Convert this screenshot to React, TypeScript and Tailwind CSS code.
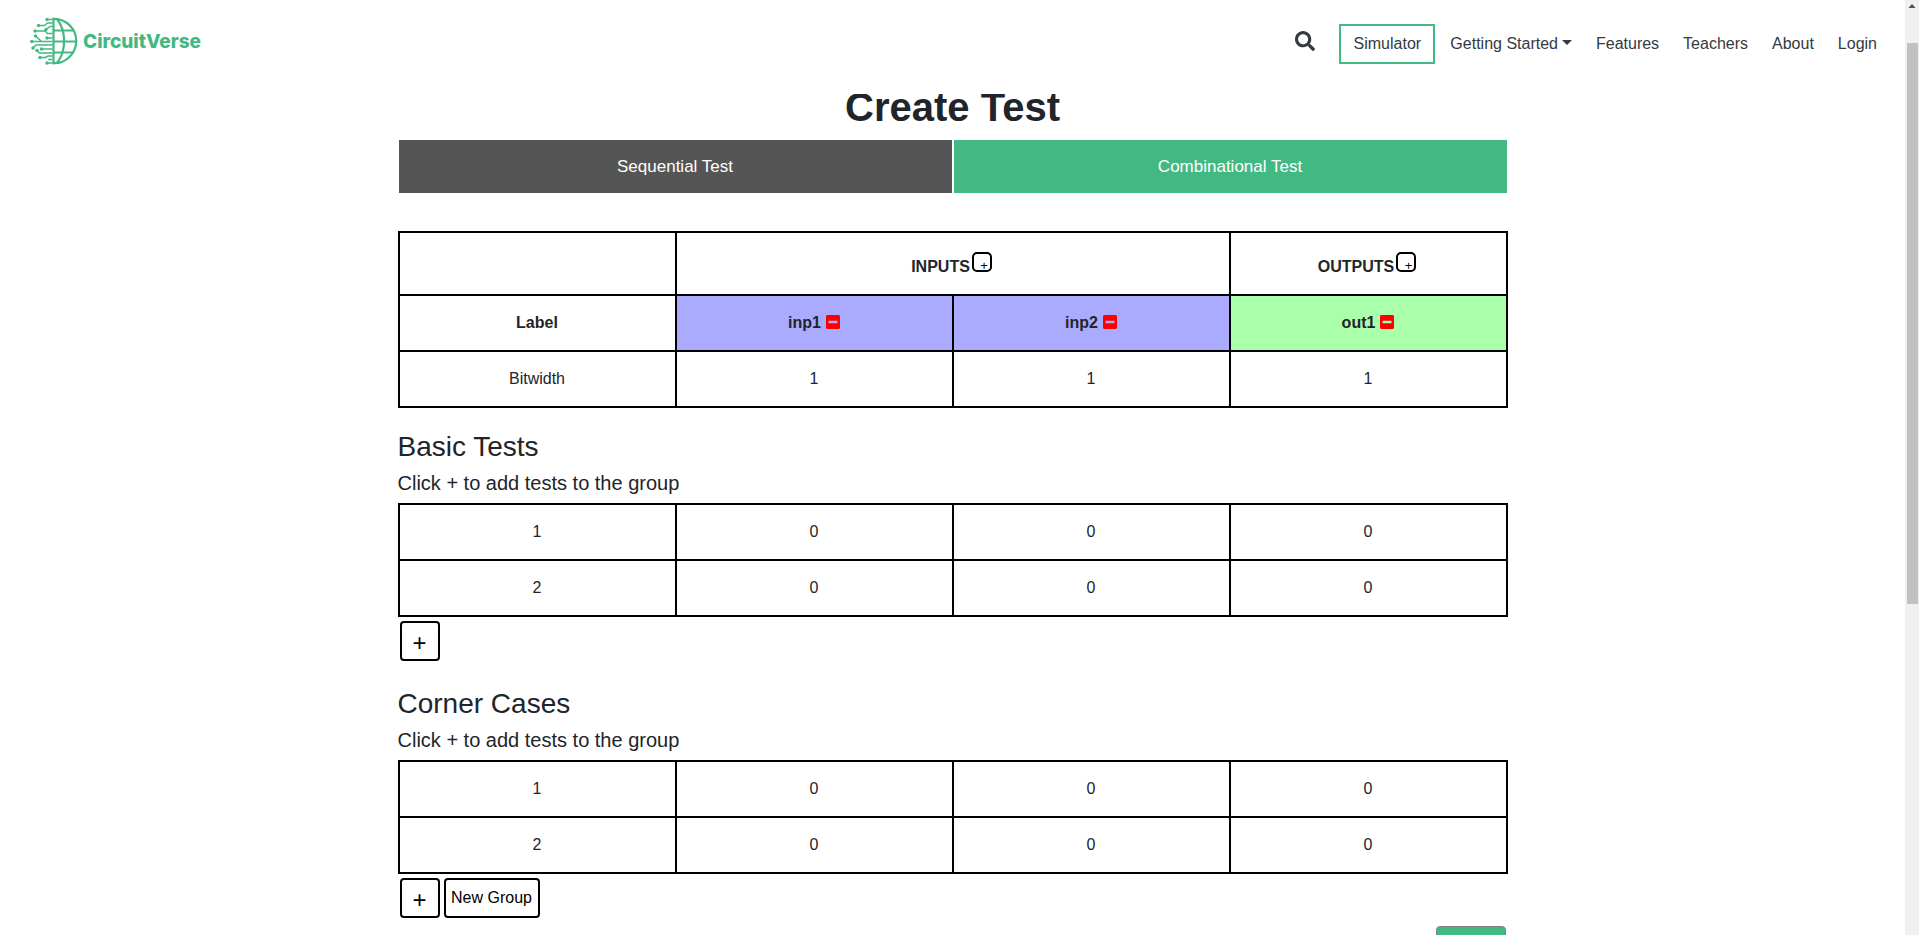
import React from "react";
import { FaSearch, FaMinusSquare } from "react-icons/fa";

const cell = "border-2 border-black p-0 text-center";

const logoNodes = [
  [17, 2.5],
  [8.5, 8.5],
  [16, 12.5],
  [5, 14],
  [5.5, 19],
  [17, 21],
  [1.8, 24.5],
  [3, 31],
  [7, 33.5],
  [11.5, 32],
  [10, 40.5],
  [17, 46],
];

function Logo() {
  return (
    <svg width="48" height="48" viewBox="0 0 48 48" fill="none" stroke="#42b983" aria-hidden="true">
      <g strokeWidth="2.2">
        <path d="M23.500 0.800V47.200" />
        <path d="M22.500 1.800H24A22.200 22.200 0 0 1 24 46.200H22.500" />
        <path d="M27 2C36.500 14 36.500 34 27 46" />
        <path d="M23.500 13.500H43.500M23.500 24.500H46M23.500 35.500H43.500" />
      </g>
      <g strokeWidth="1.500">
        <path d="M22.500 2.500H17M8.500 8.500H14.500L17.500 6H22.500M22.500 9.500H20L16 12.500M5 14H15L17.500 16.500H22.500M5.500 19L11 24M22.500 21H17M22.500 24.500H1.800M22.500 28H6L3 31M22.500 32H11.500M22.500 36H9.500L7 33.500M10 40.500H15.500L18 39H22.500M22.500 42.500H18M22.500 46H17" />
      </g>
      <g fill="#42b983" stroke="none">
        {logoNodes.map(([cx, cy]) => (
          <circle key={`${cx}-${cy}`} cx={cx} cy={cy} r="1.700" />
        ))}
      </g>
    </svg>
  );
}

function Navbar() {
  return (
    <nav className="relative z-10 flex h-[94px] items-start justify-between bg-white pl-[30px] pr-[28px] text-base text-[#343a40]">
      <a href="#home" className="mt-[17px] flex items-center gap-[5px] font-[family-name:Inter,sans-serif] text-[19px] font-extrabold text-[#42b983]">
        <Logo />
        <span className="pt-0.5">CircuitVerse</span>
      </a>
      <div className="mt-6 flex h-10 items-center">
        <button aria-label="Search" className="mb-1.5 mr-6">
          <FaSearch size={20} />
        </button>
        <a href="#simulator" className="mr-[15px] flex h-10 w-24 items-center justify-center border-2 border-[#42b983]">Simulator</a>
        <button className="mr-6 flex items-center">
          Getting Started
          <svg width="10" height="5" viewBox="0 0 10 5" className="mb-1 ml-1" fill="currentColor" aria-hidden="true">
            <path d="M0 0H10L5 5Z" />
          </svg>
        </button>
        <div className="flex gap-6">
          <a href="#features">Features</a>
          <a href="#teachers">Teachers</a>
          <a href="#about">About</a>
          <a href="#login">Login</a>
        </div>
      </div>
    </nav>
  );
}

function PinGroupTitle({ text, action }: { text: string; action: string }) {
  return (
    <span className="inline-flex items-end gap-0.5 pr-0.5 pt-1 align-middle">
      {text}
      <button
        aria-label={action}
        className="mb-[7px] flex h-5 w-5 items-end justify-end rounded-[5px] border-2 border-black pr-0.5 text-[13px] font-normal leading-[9px] text-black"
      >
        +
      </button>
    </span>
  );
}

function PinHeader({ name, tone }: { name: string; tone: string }) {
  return (
    <th className={`${cell} ${tone} font-bold`}>
      <span className="inline-flex items-center gap-[5px]">
        {name}
        <button aria-label={`Remove ${name}`} className="mb-0.5 text-[#ff0000]">
          <FaMinusSquare className="h-4 w-3.5" />
        </button>
      </span>
    </th>
  );
}

function TestGroup({ title, children }: { title: string; children?: React.ReactNode }) {
  return (
    <section>
      <h3 className="mb-[7px] text-[28px] leading-[34px]">{title}</h3>
      <h5 className="mb-2 text-xl leading-6">Click + to add tests to the group</h5>
      <table className="w-full table-fixed border-collapse">
        <tbody>
          {[1, 2].map((n) => (
            <tr key={n} className="h-14">
              <td className={cell}>{n}</td>
              <td className={cell}>0</td>
              <td className={cell}>0</td>
              <td className={cell}>0</td>
            </tr>
          ))}
        </tbody>
      </table>
      <div className="ml-0.5 mt-1 flex gap-1 text-black">
        <button aria-label="Add test" className="h-10 w-10 rounded-[4px] border-2 border-black pt-1 text-2xl leading-8">+</button>
        {children}
      </div>
    </section>
  );
}

function Scrollbar() {
  return (
    <div className="flex w-[14px] shrink-0 flex-col items-center bg-[#f0f0f0]" aria-hidden="true">
      <svg width="14" height="43" viewBox="0 0 14 43" fill="#505050">
        <path d="M3.500 8L7 4L10.500 8Z" />
      </svg>
      <div className="h-[60vh] w-[11px] bg-[#c1c1c1]" />
    </div>
  );
}

export default function App() {
  return (
    <div className="flex h-screen overflow-hidden bg-white font-['Liberation_Sans',sans-serif] text-base text-[#212529]">
      <div className="min-w-0 flex-1 overflow-hidden">
        <Navbar />
        <main className="mx-auto -mt-[11px] max-w-[1110px]">
          <h1 className="mb-[9px] text-center text-[40px] font-bold leading-[48px]">Create Test</h1>
          <div className="grid grid-cols-2 gap-0.5 px-px text-[17px] text-white">
            <button className="h-[53px] bg-[#555555]">Sequential Test</button>
            <button className="h-[53px] bg-[#42b983]">Combinational Test</button>
          </div>
          <table className="mb-[22px] mt-[38px] w-full table-fixed border-collapse">
            <tbody>
              <tr className="h-[63px]">
                <td className={cell} />
                <th colSpan={2} className={cell}>
                  <PinGroupTitle text="INPUTS" action="Add input" />
                </th>
                <th className={cell}>
                  <PinGroupTitle text="OUTPUTS" action="Add output" />
                </th>
              </tr>
              <tr className="h-14">
                <th className={cell}>Label</th>
                <PinHeader name="inp1" tone="bg-[#aaaaff]" />
                <PinHeader name="inp2" tone="bg-[#aaaaff]" />
                <PinHeader name="out1" tone="bg-[#aaffaa]" />
              </tr>
              <tr className="h-14">
                <td className={cell}>Bitwidth</td>
                <td className={cell}>1</td>
                <td className={cell}>1</td>
                <td className={cell}>1</td>
              </tr>
            </tbody>
          </table>
          <div className="flex flex-col gap-[26px]">
            <TestGroup title="Basic Tests" />
            <TestGroup title="Corner Cases">
              <button className="h-10 w-24 whitespace-nowrap rounded-[4px] border-2 border-black">New Group</button>
            </TestGroup>
          </div>
          <div className="mt-2 flex justify-end pr-0.5">
            <button aria-label="Submit" className="h-10 w-[70px] rounded-[4px] border border-[#808080] bg-[#42b983]" />
          </div>
        </main>
      </div>
      <Scrollbar />
    </div>
  );
}
